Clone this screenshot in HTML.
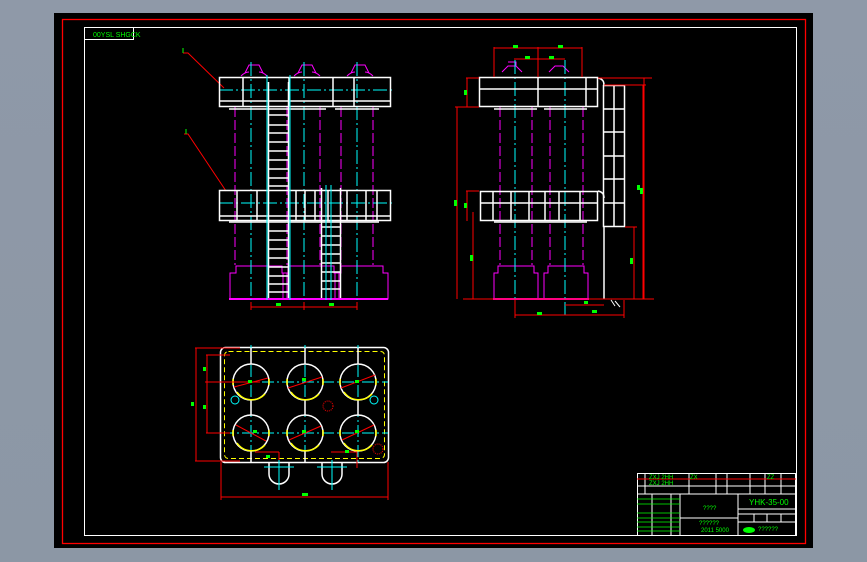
<!DOCTYPE html>
<html><head><meta charset="utf-8"><style>
html,body{margin:0;padding:0;background:#8c97a6;}
svg{display:block;font-family:"Liberation Sans",sans-serif;}
</style></head><body>
<svg width="867" height="562" viewBox="0 0 867 562" xmlns="http://www.w3.org/2000/svg">
<defs><linearGradient id="bg" x1="0" y1="0" x2="0" y2="1"><stop offset="0" stop-color="#8f99a8"/><stop offset="1" stop-color="#8c97a5"/></linearGradient></defs>
<rect width="867" height="562" fill="url(#bg)"/>
<rect x="54" y="13" width="759" height="535" fill="#000"/>
<rect x="62.5" y="19.5" width="743" height="524" fill="none" stroke="#f00" stroke-width="1.3"/>
<rect x="84.5" y="27.5" width="712" height="508" fill="none" stroke="#fff" stroke-width="1"/>
<rect x="84.5" y="27.5" width="49" height="12" fill="none" stroke="#fff"/>
<text x="93" y="37" font-size="7" fill="#0f0">00YSL SHGCK</text>

<!-- FRONT VIEW -->
<g fill="none" stroke-width="1">
<!-- leaders -->
<polyline points="183,53 188,53 224,88" stroke="#f00"/>
<polyline points="184,134 188,134 226,191" stroke="#f00"/>
<line x1="183" y1="48" x2="183" y2="53" stroke="#0f0"/>
<line x1="186" y1="129" x2="186" y2="134" stroke="#0f0"/>
<!-- magenta columns -->
<g stroke="#f0f">
<path d="M245,73 l4,-8 h10 l4,8 M241,76 q4,-4 8,-4 M259,72 q4,0 8,4"/>
<path d="M298,73 l4,-8 h10 l4,8 M294,76 q4,-4 8,-4 M312,72 q4,0 8,4"/>
<path d="M351,73 l4,-8 h10 l4,8 M347,76 q4,-4 8,-4 M365,72 q4,0 8,4"/>
<path d="M235,107 V265 M287,107 V265 M341,107 V265 M373,107 V265 M320,107 V265" stroke-dasharray="10,3"/>
<path d="M230,299 V273 h6 v-7 h46 v7 h5 v26 z M283,299 V273 h5 v-7 h46 v7 h5 v26 z M335,299 V273 h6 v-7 h42 v7 h5 v26 z"/>
<line x1="229" y1="299" x2="388" y2="299" stroke-width="2"/>
</g>
<!-- cyan centerlines -->
<g stroke="#0ff" stroke-dasharray="14,3,2,3">
<line x1="251" y1="62" x2="251" y2="300"/>
<line x1="304" y1="62" x2="304" y2="300"/>
<line x1="357" y1="62" x2="357" y2="300"/>
<line x1="219" y1="90" x2="393" y2="90"/>
<line x1="219" y1="203" x2="393" y2="203"/>
</g>
<!-- top frame -->
<g stroke="#fff" stroke-width="1.5">
<rect x="219.5" y="77.5" width="171" height="29"/>
<line x1="219" y1="101" x2="391" y2="101"/>
<line x1="229" y1="109" x2="326" y2="109"/><line x1="335" y1="109" x2="379" y2="109"/>
<line x1="243" y1="78" x2="243" y2="107"/><line x1="289" y1="78" x2="289" y2="107"/>
<line x1="333" y1="78" x2="333" y2="107"/><line x1="354" y1="78" x2="354" y2="107"/>
<!-- middle frame -->
<rect x="219.5" y="190.5" width="171" height="30"/>
<line x1="219" y1="216" x2="391" y2="216"/>
<line x1="229" y1="222" x2="379" y2="222"/>
<line x1="237" y1="191" x2="237" y2="221"/><line x1="257" y1="191" x2="257" y2="221"/>
<line x1="296" y1="191" x2="296" y2="221"/><line x1="305" y1="191" x2="305" y2="221"/>
<line x1="315" y1="191" x2="315" y2="221"/><line x1="328" y1="191" x2="328" y2="221"/>
<line x1="347" y1="191" x2="347" y2="221"/><line x1="366" y1="191" x2="366" y2="221"/>
<line x1="377" y1="191" x2="377" y2="221"/>
</g>
<!-- ladder 1 -->
<g stroke="#fff" stroke-width="1.5">
<line x1="268.5" y1="82" x2="268.5" y2="298"/><line x1="288.5" y1="82" x2="288.5" y2="298"/>
</g>
<g stroke="#0ff"><line x1="267" y1="75" x2="267" y2="300"/><line x1="290" y1="75" x2="290" y2="300"/></g>
<g stroke="#fff" stroke-width="1.5" id="r1">
<path d="M268,115h21M268,125h21M268,133h21M268,142h21M268,151h21M268,160h21M268,169h21M268,178h21M268,186h21M268,231h21M268,240h21M268,249h21M268,258h21M268,267h21M268,276h21M268,284h21M268,292h21"/>
</g>
<!-- ladder 2 -->
<g stroke="#fff" stroke-width="1.5">
<line x1="321.5" y1="188" x2="321.5" y2="298"/><line x1="340.5" y1="188" x2="340.5" y2="298"/>
<path d="M321,227h20M321,236h20M321,245h20M321,254h20M321,263h20M321,272h20M321,281h20M321,289h20"/>
</g>
<g stroke="#0ff"><line x1="326" y1="185" x2="326" y2="300"/><line x1="331" y1="185" x2="331" y2="300"/></g>
<!-- bottom dims -->
<g stroke="#f00"><line x1="251" y1="307" x2="357" y2="307"/><line x1="251" y1="302" x2="251" y2="310"/><line x1="304" y1="302" x2="304" y2="310"/><line x1="357" y1="302" x2="357" y2="310"/></g>
</g>
<rect x="276" y="303" width="5" height="3" fill="#0f0"/><rect x="329" y="303" width="5" height="3" fill="#0f0"/>

<!-- SIDE VIEW -->
<g fill="none" stroke-width="1">
<g stroke="#f0f">
<path d="M502,72 l6,-6 h8 v-4 h-8 M516,66 l6,6 M549,72 l6,-6 h8 l6,6"/>
<path d="M500,107 V265 M532,107 V265 M550,107 V265 M583,107 V265" stroke-dasharray="10,3"/>
<path d="M494,299 V273 h4 v-7 h36 v7 h4 v26 z M544,299 V273 h4 v-7 h36 v7 h4 v26 z"/>
<line x1="493" y1="299" x2="589" y2="299" stroke-width="2"/>
</g>
<g stroke="#0ff" stroke-dasharray="14,3,2,3">
<line x1="515" y1="60" x2="515" y2="315"/><line x1="565" y1="60" x2="565" y2="315"/>
</g>
<g stroke="#fff" stroke-width="1.5">
<rect x="479.5" y="77.5" width="118" height="29"/>
<line x1="479" y1="89" x2="598" y2="89"/>
<line x1="494" y1="109" x2="537" y2="109"/><line x1="544" y1="109" x2="587" y2="109"/>
<line x1="538" y1="78" x2="538" y2="107"/><line x1="586" y1="78" x2="586" y2="107"/>
<rect x="480.5" y="191.5" width="117" height="29"/>
<line x1="480" y1="203" x2="598" y2="203"/>
<line x1="494" y1="222" x2="587" y2="222"/>
<line x1="493" y1="191" x2="493" y2="221"/><line x1="511" y1="191" x2="511" y2="221"/>
<line x1="529" y1="191" x2="529" y2="221"/><line x1="545" y1="191" x2="545" y2="221"/>
<line x1="559" y1="191" x2="559" y2="221"/><line x1="580" y1="191" x2="580" y2="221"/>
<path d="M598,78 q6,1 6,7 M598,191 q6,1 6,7"/>
<rect x="603.5" y="85.5" width="21" height="141"/>
<line x1="614" y1="86" x2="614" y2="226"/>
<path d="M604,109h21M604,132h21M604,156h21M604,179h21M604,203h21"/>
<line x1="604" y1="226" x2="604" y2="299"/>
</g>
<g stroke="#f00">
<line x1="463" y1="299" x2="654" y2="299"/>
<line x1="494" y1="48" x2="582" y2="48"/><line x1="514" y1="59" x2="565" y2="59"/>
<line x1="494" y1="47" x2="494" y2="77"/><line x1="538" y1="47" x2="538" y2="77"/><line x1="582" y1="47" x2="582" y2="77"/>
<line x1="466" y1="78" x2="479" y2="78"/><line x1="467" y1="78" x2="467" y2="107"/>
<line x1="455" y1="107" x2="479" y2="107"/><line x1="457" y1="107" x2="457" y2="299"/>
<line x1="467" y1="191" x2="467" y2="221"/><line x1="466" y1="191" x2="479" y2="191"/>
<line x1="473" y1="212" x2="473" y2="299"/>
<line x1="604" y1="85" x2="646" y2="85"/><line x1="644" y1="78" x2="644" y2="299"/><line x1="598" y1="78" x2="652" y2="78"/>
<line x1="643" y1="85" x2="643" y2="299"/><line x1="625" y1="227" x2="637" y2="227"/><line x1="634" y1="227" x2="634" y2="299"/>
<line x1="515" y1="315" x2="624" y2="315"/><line x1="565" y1="305" x2="604" y2="305"/>
<line x1="515" y1="300" x2="515" y2="318"/><line x1="624" y1="300" x2="624" y2="318"/>
</g>
<path d="M611,300 l4,6 M615,301 l5,6" stroke="#fff"/>
</g>
<g fill="#0f0">
<rect x="513" y="45" width="5" height="3"/><rect x="558" y="45" width="5" height="3"/><rect x="525" y="56" width="5" height="3"/><rect x="549" y="56" width="5" height="3"/>
<rect x="464" y="90" width="3" height="5"/><rect x="454" y="200" width="3" height="6"/><rect x="464" y="203" width="3" height="5"/><rect x="470" y="255" width="3" height="6"/>
<rect x="640" y="188" width="3" height="6"/><rect x="630" y="258" width="3" height="6"/><rect x="637" y="185" width="3" height="5"/>
<rect x="537" y="312" width="5" height="3"/><rect x="592" y="310" width="5" height="3"/><rect x="584" y="301" width="4" height="3"/>
</g>

<!-- PLAN VIEW -->
<g fill="none" stroke-width="1">
<rect x="220.5" y="347.5" width="168" height="115" rx="5" stroke="#fff" stroke-width="1.5"/>
<rect x="224.5" y="351.5" width="160" height="107" rx="4" stroke="#ff0" stroke-dasharray="5,3"/>
<g stroke="#0ff" stroke-dasharray="12,3,2,3">
<line x1="222" y1="382" x2="388" y2="382"/><line x1="222" y1="433" x2="388" y2="433"/>
<line x1="251" y1="345" x2="251" y2="465"/><line x1="305" y1="345" x2="305" y2="465"/><line x1="358" y1="345" x2="358" y2="465"/>
</g>
<g stroke="#fff" stroke-width="1.5">
<circle cx="251" cy="382" r="18"/><circle cx="305" cy="382" r="18"/><circle cx="358" cy="382" r="18"/>
<circle cx="251" cy="433" r="18"/><circle cx="305" cy="433" r="18"/><circle cx="358" cy="433" r="18"/>
<path d="M251,348V364M305,348V364M358,348V364M251,400V415M305,400V415M358,400V415M251,451V462M305,451V462"/>
</g>
<g stroke="#ff0" stroke-width="1.5">
<path d="M237,392 a18,18 0 0 0 28,2 M291,392 a18,18 0 0 0 28,2 M344,392 a18,18 0 0 0 28,2 M237,443 a18,18 0 0 0 28,2 M291,443 a18,18 0 0 0 28,2 M344,443 a18,18 0 0 0 28,2"/>
<path d="M233,379v6M269,379v6M287,379v6M323,379v6M340,379v6M376,379v6M233,430v6M269,430v6M287,430v6M323,430v6M340,430v6M376,430v6"/>
</g>
<g stroke="#f00">
<line x1="234" y1="387" x2="268" y2="378"/><line x1="288" y1="388" x2="322" y2="377"/><line x1="341" y1="388" x2="375" y2="375"/>
<line x1="236" y1="425" x2="266" y2="441"/><line x1="289" y1="440" x2="321" y2="426"/><line x1="342" y1="440" x2="374" y2="425"/>
<line x1="195" y1="348" x2="240" y2="348"/><line x1="195" y1="461" x2="240" y2="461"/><line x1="196" y1="348" x2="196" y2="461"/>
<line x1="206" y1="355" x2="230" y2="355"/><line x1="206" y1="433" x2="230" y2="433"/><line x1="207" y1="355" x2="207" y2="433"/>
<line x1="205" y1="382" x2="260" y2="382"/>
<line x1="221" y1="497" x2="388" y2="497"/><line x1="221" y1="462" x2="221" y2="500"/><line x1="388" y1="462" x2="388" y2="500"/>
<line x1="255" y1="452" x2="279" y2="452"/><line x1="279" y1="452" x2="279" y2="468"/>
<line x1="331" y1="452" x2="357" y2="452"/><line x1="357" y1="452" x2="357" y2="468"/>
</g>
<g stroke="#fff" stroke-width="1.5">
<path d="M269,462 v12 a10,10 0 0 0 20,0 v-12"/><path d="M322,462 v12 a10,10 0 0 0 20,0 v-12"/>
</g>
<g stroke="#0ff"><line x1="264" y1="467" x2="294" y2="467"/><line x1="317" y1="467" x2="347" y2="467"/><line x1="279" y1="460" x2="279" y2="490"/><line x1="332" y1="460" x2="332" y2="490"/>
<circle cx="235" cy="400" r="4"/><circle cx="374" cy="400" r="4"/></g>
<circle cx="328" cy="406" r="5" stroke="#f00" stroke-dasharray="1,1"/>
<circle cx="378" cy="449" r="5" stroke="#f00" stroke-dasharray="1,1"/>
</g>
<g fill="#0f0">
<rect x="248" y="380" width="4" height="3"/><rect x="302" y="378" width="4" height="3"/><rect x="355" y="380" width="4" height="3"/>
<rect x="253" y="430" width="4" height="3"/><rect x="302" y="430" width="4" height="3"/><rect x="355" y="430" width="4" height="3"/>
<rect x="203" y="367" width="3" height="4"/><rect x="203" y="405" width="3" height="4"/><rect x="191" y="402" width="3" height="4"/>
<rect x="302" y="493" width="6" height="3"/><rect x="266" y="455" width="4" height="3"/><rect x="345" y="450" width="4" height="3"/>
</g>

<!-- TITLE BLOCK -->
<g fill="none" stroke="#fff" stroke-width="1">
<rect x="637.5" y="473.5" width="158" height="62"/>
<line x1="637" y1="486" x2="796" y2="486"/><line x1="637" y1="494" x2="796" y2="494"/>
<line x1="680" y1="494" x2="680" y2="535"/><line x1="738" y1="494" x2="738" y2="535"/>
<line x1="738" y1="509" x2="796" y2="509"/><line x1="738" y1="514" x2="796" y2="514"/><line x1="738" y1="522" x2="796" y2="522"/>
<line x1="680" y1="518" x2="738" y2="518"/>
<line x1="645" y1="473" x2="645" y2="494"/><line x1="689" y1="473" x2="689" y2="494"/><line x1="716" y1="473" x2="716" y2="494"/><line x1="727" y1="473" x2="727" y2="494"/><line x1="750" y1="473" x2="750" y2="494"/><line x1="765" y1="473" x2="765" y2="494"/><line x1="781" y1="473" x2="781" y2="494"/>
<line x1="652" y1="494" x2="652" y2="535"/><line x1="671" y1="494" x2="671" y2="535"/>
<line x1="754" y1="514" x2="754" y2="522"/><line x1="767" y1="514" x2="767" y2="522"/><line x1="781" y1="514" x2="781" y2="522"/>
</g>
<g stroke="#0f0" stroke-width="0.8">
<path d="M637,499h43M637,504h43M637,513h43M637,518h43M637,522h43M637,527h43M637,531h43"/>
</g>
<line x1="637" y1="479" x2="796" y2="479" stroke="#f00"/>
<g fill="#0f0" font-size="6">
<text x="649" y="479">ZXJ 2HH</text><text x="649" y="485">ZXJ 2HH</text><text x="690" y="479">ZX</text>
<text x="767" y="479">ZZ</text><text x="703" y="510">????</text>
<text x="699" y="525">??????</text><text x="701" y="532">2011 5000</text>
<text x="749" y="505" font-size="8">YHK-35-00</text>
<text x="758" y="531">??????</text>
</g>
<ellipse cx="749" cy="530" rx="6" ry="3" fill="#0f0"/>
</svg>
</body></html>
